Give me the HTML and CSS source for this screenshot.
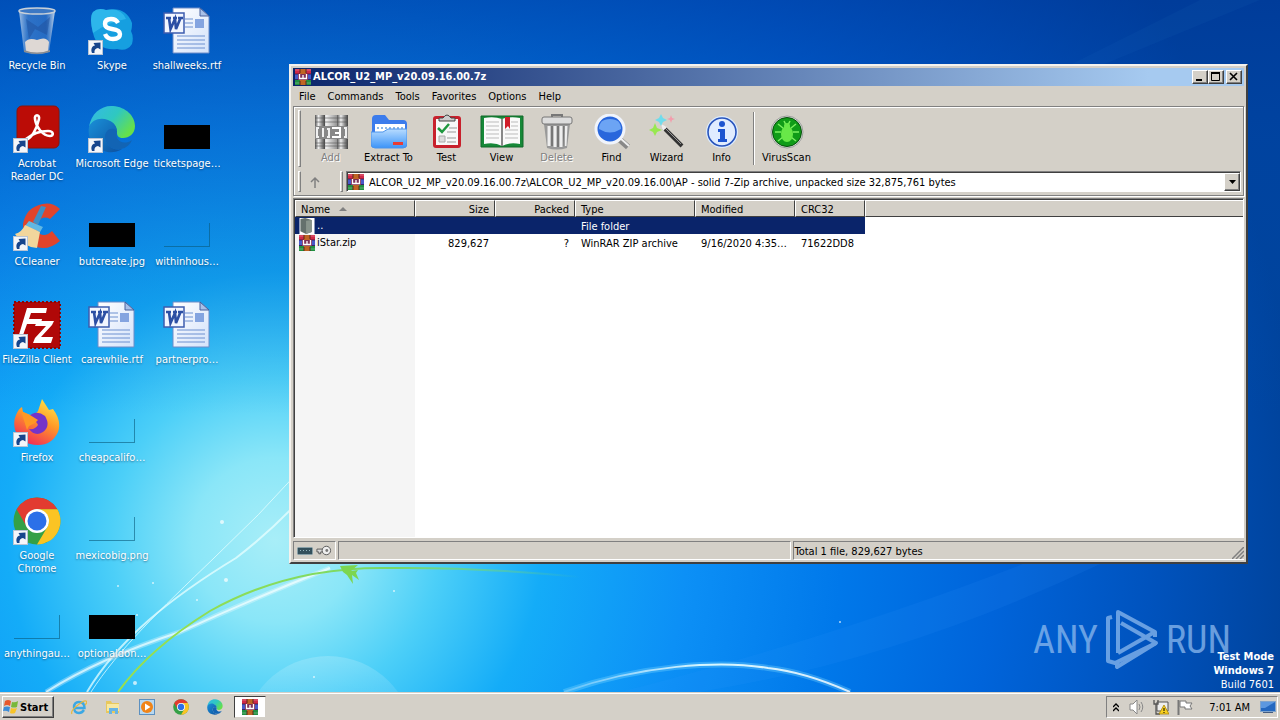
FILE: index.html
```html
<!DOCTYPE html>
<html lang="en">
<head>
<meta charset="utf-8">
<title>ALCOR_U2_MP_v20.09.16.00.7z</title>
<link rel="stylesheet" href="styles.css">
</head>
<body>
<svg class="sprite" aria-hidden="true">
  <defs>
    <radialGradient id="glow" gradientUnits="userSpaceOnUse" cx="275" cy="540" r="1030">
      <stop offset="0" stop-color="#a8eef8"/><stop offset=".08" stop-color="#8ae6f8"/><stop offset=".16" stop-color="#4ccff8"/>
      <stop offset=".26" stop-color="#14acf8"/><stop offset=".4" stop-color="#0c90f6"/><stop offset=".55" stop-color="#0078ea"/>
      <stop offset=".7" stop-color="#0064da"/><stop offset=".85" stop-color="#0053be"/><stop offset="1" stop-color="#00429a"/>
    </radialGradient>
    <linearGradient id="shade" x1="0" y1="0" x2="0" y2="1">
      <stop offset="0" stop-color="#00389a" stop-opacity=".6"/><stop offset=".2" stop-color="#0044a8" stop-opacity=".4"/><stop offset=".6" stop-color="#0050b0" stop-opacity="0"/>
    </linearGradient>
    <linearGradient id="orb" x1="0" y1="0" x2="0" y2="1"><stop offset="0" stop-color="#fff" stop-opacity=".18"/><stop offset=".5" stop-color="#fff" stop-opacity="0"/></linearGradient>
    <linearGradient id="streak" x1="0" y1="0" x2="1" y2="0"><stop offset="0" stop-color="#fff" stop-opacity=".2"/><stop offset=".5" stop-color="#d8f8ff"/><stop offset="1" stop-color="#fff" stop-opacity=".8"/></linearGradient>
    <linearGradient id="stem" x1="0" y1="0" x2="1" y2="0"><stop offset="0" stop-color="#9be04a"/><stop offset=".6" stop-color="#78d868"/><stop offset="1" stop-color="#78d868" stop-opacity="0"/></linearGradient>
    <linearGradient id="edgeA" x1="0" y1="0" x2="1" y2=".6"><stop offset="0" stop-color="#35b8e8"/><stop offset=".55" stop-color="#2fc8c0"/><stop offset="1" stop-color="#66e04a"/></linearGradient>
    <linearGradient id="edgeB" x1="0" y1="0" x2="1" y2="1"><stop offset="0" stop-color="#1a90d8"/><stop offset="1" stop-color="#0c50a0"/></linearGradient>
    <linearGradient id="fox" x1=".8" y1="0" x2=".3" y2="1"><stop offset="0" stop-color="#ffe848"/><stop offset=".45" stop-color="#ff9a28"/><stop offset="1" stop-color="#f02858"/></linearGradient>
    <linearGradient id="glass" x1="0" y1="0" x2="1" y2="0"><stop offset="0" stop-color="#c8dcf0" stop-opacity=".8"/><stop offset=".25" stop-color="#5c90d0" stop-opacity=".5"/><stop offset=".75" stop-color="#4a80c8" stop-opacity=".5"/><stop offset="1" stop-color="#d8e4f0" stop-opacity=".9"/></linearGradient>
    <linearGradient id="folder" x1="0" y1="0" x2="0" y2="1"><stop offset="0" stop-color="#b8dcff"/><stop offset="1" stop-color="#3c94f8"/></linearGradient>
    <linearGradient id="steel" x1="0" y1="0" x2="1" y2="0"><stop offset="0" stop-color="#555"/><stop offset=".35" stop-color="#eee"/><stop offset=".65" stop-color="#999"/><stop offset="1" stop-color="#444"/></linearGradient>
    <linearGradient id="page" x1="0" y1="0" x2="1" y2="1"><stop offset="0" stop-color="#fff"/><stop offset="1" stop-color="#d4e2fa"/></linearGradient>
  </defs>
  <symbol id="arrow" viewBox="0 0 15 15"><rect x=".5" y=".5" width="14" height="14" fill="#f4f6fa" stroke="#b8c4d4"/><path d="M4 13C2.500 9 4 6 7 5.500L5.500 3l7-.5V9.500L10 8C7.500 8.500 6 10 6.500 13Z" fill="#17458c"/></symbol>
  <symbol id="rar" viewBox="0 0 16 16"><path d="M0 0h16v5H0z" fill="#d02848"/><path d="M0 5h16v6H0z" fill="#4858c8"/><path d="M0 11h16v5H0z" fill="#209040"/><path d="M0 1h16M0 14h16" stroke="#fff" stroke-opacity=".3"/><path d="M0 5h16M0 10.500h16" stroke="#301038" stroke-opacity=".7"/><path d="M5 0h6v16H5z" fill="#c06424"/><path d="M5 0v4M11 0v4M5 12v4M11 12v4" stroke="#582818"/><path d="M3 5h10v6H3z" fill="#803058"/><path d="M4.500 5v4.500h3.500V6v3.500h3.500V5" fill="none" stroke="#fff" stroke-width="1.300"/></symbol>
  <symbol id="word" viewBox="0 0 48 48"><path d="M10 1h27l9 8v37H10z" fill="url(#page)" stroke="#6c8cc8"/><path d="M37 1v8h9z" fill="#a8c0e8" stroke="#48609c"/><path d="M22 12h8M22 16h8M22 20h8M14 29h28M14 33h28M14 37h28M14 41h28" stroke="#6c90d0"/><rect x="32" y="12" width="9" height="9" fill="#84a4e0"/><rect x="1" y="6" width="20" height="20" fill="#f2f6ff" stroke="#3c5cae" stroke-width="1.500"/><path d="M3 11h5M10 11h4M15 11h5M6 11l1.500 11L12 12l1 10 4.500-11" fill="none" stroke="#2c4fa4" stroke-width="2.600"/></symbol>
  <symbol id="edge" viewBox="0 0 48 48"><path d="M1 22C3 8 14 0 25 1c13 1 22 10 22 20 0 8-6 12-12 12-4 0-6-2-6-5 0-8-6-13-14-13C8 15 3 18 1 22Z" fill="url(#edgeA)"/><path d="M1 22c3-8 12-10 19-7 6 2 9 7 9 11-4-4-12-1-12 6 0 8 8 14 17 12-6 4-13 4-18 2C5 43-1 33 1 22Z" fill="url(#edgeB)"/><path d="M29 26c-5-5-12-1-12 6 0 8 8 14 16 12 5-1 9-4 11-9-7 5-13 2-15-2-1-2 0-4 0-7Z" fill="#1264b4"/></symbol>
  <symbol id="chrome" viewBox="0 0 48 48"><circle cx="24" cy="24" r="23.500" fill="#34a046"/><path d="M3.600 12.300A23.500 23.500 0 0 1 44.400 12.300H24A12 12 0 0 0 13.800 30Z" fill="#e23b30"/><path d="M44.400 12.300A23.500 23.500 0 0 1 24 47.500L34.400 30A12 12 0 0 0 24 12.300Z" fill="#fbc424"/><circle cx="24" cy="24" r="12" fill="#fff"/><circle cx="24" cy="24" r="9.500" fill="#2c70e8"/></symbol>
</svg>

<main class="desktop">
  <svg class="wallpaper" viewBox="0 0 1280 692" preserveAspectRatio="xMidYMid slice" aria-hidden="true">
    <rect width="1280" height="692" fill="url(#glow)"/>
    <rect width="1280" height="692" fill="url(#shade)"/>
    <path d="M1060 70L1200 0h60L1090 70Z" fill="#2c80c8" opacity=".08"/>
    <path d="M620 692Q900 620 1130 520L1100 564Q900 660 700 692Z" fill="#38a0ff" opacity=".1"/>
    <circle cx="328" cy="742" r="86" fill="url(#orb)"/>
    <g fill="none">
      <path d="M46 692Q100 658 180 632Q250 600 330 568" stroke="#fff" stroke-width="5" opacity=".3"/>
      <path d="M46 692Q100 658 180 632Q250 600 330 568" stroke="#f4ffff" stroke-width="2" opacity=".7"/>
      <path d="M87 692C118 640 170 598 236 558Q270 532 300 500" stroke="#e8ffff" stroke-width="2" opacity=".75"/>
      <path d="M91 692C118 650 160 610 214 558Q260 515 300 470" stroke="#e8ffff" stroke-width="1" opacity=".75"/>
      <path d="M118 692Q150 648 210 611Q290 566 390 568Q480 567 580 577" stroke="url(#stem)" stroke-width="2"/>
      <path d="M564 692C640 665 720 660 768 668Q805 672 850 692" stroke="#7cd8ff" stroke-width="6" opacity=".35"/>
      <path d="M564 692C640 665 720 660 768 668Q805 672 850 692" stroke="url(#streak)" stroke-width="2"/>
    </g>
    <path d="M340 566l18-1-7 6 7-1-2 3 3 7-7-5 1 9-6-9-4-3Z" fill="#7cd650"/>
    <g fill="#fff" opacity=".7"><circle cx="226" cy="580" r="2"/><circle cx="222" cy="522" r="2"/><circle cx="135" cy="683" r="2"/><circle cx="118" cy="586" r="1"/><circle cx="153" cy="583" r="1"/><circle cx="197" cy="600" r="1"/><circle cx="314" cy="677" r="1"/><circle cx="394" cy="591" r="1"/><circle cx="137" cy="615" r="1"/><circle cx="840" cy="622" r="1"/></g>
  </svg>

  <ul class="shortcuts">
    <li class="shortcut"><svg class="pic" viewBox="0 0 48 48"><path d="M6 4l5 41q13 5 25 0l6-41Z" fill="url(#glass)"/><path d="M13 12l12 8 12-10-3 18-12-6-6 10Z" fill="#20509c" opacity=".5"/><path d="M12 35q4-5 12-2 9-4 12 2l-1 10q-11 3-22 0Z" fill="#ded8d4"/><path d="M11 43q13 5 26 0v2q-13 4-26 0" fill="#8a8c90"/><ellipse cx="24" cy="4" rx="18" ry="3" fill="#3c78c4" stroke="#c8d0d8" stroke-width="1.500"/></svg><span class="label">Recycle Bin</span></li>
    <li class="shortcut"><svg class="pic" viewBox="0 0 48 48"><rect x="4" y="1" width="42" height="42" rx="5" fill="#bb0c06" stroke="#8c1408"/><path d="M11 36c8-2 13-13 15-22 1-5-5-5-4 0 1 8 8 17 15 17 4 0 4-5-2-5-8 0-16 3-22 8" fill="none" stroke="#fff" stroke-width="2.600"/><use href="#arrow" x="0" y="33" width="15" height="15"/></svg><span class="label">Acrobat<br>Reader DC</span></li>
    <li class="shortcut"><svg class="pic" viewBox="0 0 48 48"><path d="M47 6Q39-1 30 1 13 4 10 21q0 17 11 22 13 6 26-5L39 28q-6 6-12 3-6-5-2-12 5-7 12-3Z" fill="#e0442c"/><path d="M33 4l-8 18-5-3L28 3Z" fill="#3c90c8"/><path d="M16 18l14 6-3 5-15-6Z" fill="#60b8e4"/><path d="M12 22l15 7-3 16Q10 44 2 31Q9 29 12 22Z" fill="#f2d69c"/><use href="#arrow" x="0" y="33" width="15" height="15"/></svg><span class="label">CCleaner</span></li>
    <li class="shortcut"><svg class="pic" viewBox="0 0 48 48"><rect x="1" y="1" width="46" height="46" fill="#b00808" stroke="#8c0404" stroke-width="2" stroke-dasharray="2 2"/><path d="M14 7h20l-1 5H18l-2 6h13l-1 5H14l-5 14H5Z" fill="#fff"/><path d="M24 20h17l-2 4-11 12h12l-2 6H20l2-5 11-12H22Z" fill="#fff"/><use href="#arrow" x="0" y="33" width="15" height="15"/></svg><span class="label">FileZilla Client</span></li>
    <li class="shortcut"><svg class="pic" viewBox="0 0 48 48"><path d="M3 16Q6 9 9 8l1 5 7 3Q23 15 25 12L29 0l7 11 4-1Q49 22 45 33 39 46 25 46 8 46 2 31 0 22 3 16Z" fill="url(#fox)"/><path d="M15 18q8-8 17-1 6 10-2 16-8 5-14-3 6 1 9-4-2-5-10-8Z" fill="#7434c8"/><path d="M8 12l9 4 8 5-3 3-6 3-2 4Z" fill="#ff9824"/><use href="#arrow" x="0" y="33" width="15" height="15"/></svg><span class="label">Firefox</span></li>
    <li class="shortcut"><svg class="pic" viewBox="0 0 48 48"><use href="#chrome" width="48" height="48"/><use href="#arrow" x="0" y="33" width="15" height="15"/></svg><span class="label">Google<br>Chrome</span></li>
    <li class="shortcut"><span class="thumb"></span><span class="label">anythingau…</span></li>
    <li class="shortcut"><svg class="pic" viewBox="0 0 48 48"><path d="M5 5Q10 0 18 3 38-1 44 16q0 6-1 8 3 6 1 13-5 8-15 5Q9 44 5 26 1 10 5 5Z" fill="#169fe0"/><path d="M5 5Q10 0 18 3 33 0 38 12 20 15 5 26 1 10 5 5Z" fill="#38c0f0" opacity=".7"/><path d="M30 16q-2-4-7-4-6 0-6 5 0 4 7 5 8 1 8 5 0 5-7 5-6 0-8-5" fill="none" stroke="#fff" stroke-width="4.400"/><use href="#arrow" x="0" y="33" width="15" height="15"/></svg><span class="label">Skype</span></li>
    <li class="shortcut"><svg class="pic" viewBox="0 0 48 48"><use href="#edge" width="48" height="48"/><use href="#arrow" x="0" y="33" width="15" height="15"/></svg><span class="label">Microsoft Edge</span></li>
    <li class="shortcut"><span class="thumb dark"></span><span class="label">butcreate.jpg</span></li>
    <li class="shortcut"><svg class="pic"><use href="#word"/></svg><span class="label">carewhile.rtf</span></li>
    <li class="shortcut"><span class="thumb"></span><span class="label">cheapcalifo…</span></li>
    <li class="shortcut"><span class="thumb"></span><span class="label">mexicobig.png</span></li>
    <li class="shortcut"><span class="thumb dark"></span><span class="label">optionaldon…</span></li>
    <li class="shortcut"><svg class="pic"><use href="#word"/></svg><span class="label">shallweeks.rtf</span></li>
    <li class="shortcut"><span class="thumb dark"></span><span class="label">ticketspage…</span></li>
    <li class="shortcut"><span class="thumb"></span><span class="label">withinhous…</span></li>
    <li class="shortcut"><svg class="pic"><use href="#word"/></svg><span class="label">partnerpro…</span></li>
  </ul>

  <div class="brand">
    <span>ANY</span>
    <svg class="play" viewBox="0 0 56 62" aria-hidden="true"><g fill="none" stroke="currentColor" stroke-width="4" stroke-linejoin="round"><path d="M8 8L4 9v43l7 2L52 34 17 14"/><path d="M14 44V3l37 20v5M14 44l35-20M52 34L13 58v-4"/></g></svg>
    <span>RUN</span>
  </div>
  <div class="build"><strong>Test Mode</strong><strong>Windows 7</strong><span>Build 7601</span></div>

  <section class="window">
    <header class="titlebar">
      <svg class="small"><use href="#rar"/></svg>
      <h1 class="title">ALCOR_U2_MP_v20.09.16.00.7z</h1>
      <button class="caption" aria-label="Minimize"><svg viewBox="0 0 12 10"><path d="M2 8h6" stroke="#000" stroke-width="2"/></svg></button>
      <button class="caption" aria-label="Maximize"><svg viewBox="0 0 12 10"><path d="M1.500 1v7.500h8V1M1 1h9" fill="none" stroke="#000"/><path d="M1 1h9" stroke="#000" stroke-width="2"/></svg></button>
      <button class="caption close" aria-label="Close"><svg viewBox="0 0 12 10"><path d="M2 1l7 7M9 1L2 8" stroke="#000" stroke-width="1.600"/></svg></button>
    </header>
    <nav class="menu"><button>File</button><button>Commands</button><button>Tools</button><button>Favorites</button><button>Options</button><button>Help</button></nav>
    <div class="bars">
      <div class="toolbar">
        <span class="grip"></span>
        <button class="tool" disabled><svg viewBox="0 0 36 36"><path d="M2 1h11v34H2zM13 1h11v34H13zM24 1h11v34H24z" fill="url(#steel)"/><path d="M2 1h10v34H2z" fill="url(#steel)"/><path d="M24 1h11v34H24z" fill="url(#steel)"/><path d="M2 4h33M2 8h33M2 29h33M2 32h33" stroke="#555" opacity=".6"/><path d="M2 12h33v13H2z" fill="#888"/><path d="M6 14H4v9h2M10 14v9M14 15h2v8h-2M31 14h2v9h-2" stroke="#f0f0f0" stroke-width="2" fill="none"/><path d="M19 14h8v9h-8M22 19h5" stroke="#fff" stroke-width="2" fill="none"/></svg>Add</button>
        <button class="tool wide"><svg viewBox="0 0 36 36"><path d="M1 5q0-4 4-4h9l4 5h14q4 0 4 4v15H1Z" fill="#3c7cec"/><path d="M4 10h30v12H4z" fill="#fff"/><path d="M6 14h27" stroke="#8cb8e8" stroke-dasharray="2 2" stroke-width="2"/><path d="M0 18h12l5-3h19v15q0 4-4 4H4q-4 0-4-4Z" fill="url(#folder)" stroke="#4c94ec"/><path d="M22 28h10v3H22z" fill="#e83c34"/></svg>Extract To</button>
        <button class="tool"><svg viewBox="0 0 36 36"><rect x="4" y="2" width="28" height="32" rx="3" fill="#c8202c"/><path d="M7 5h22v26H7z" fill="#f8f8f8"/><path d="M10 7V4h4q4-6 8 0h4v3Z" fill="#ccc" stroke="#444"/><path d="M9 14l4 4 7-8" fill="none" stroke="#209840" stroke-width="2.500"/><path d="M18 18h9M20 14h8M18 24h9M18 28h9" stroke="#999"/><path d="M10 22h6v6h-6z" fill="#ddd" stroke="#aaa"/></svg>Test</button>
        <button class="tool"><svg class="book" viewBox="0 0 44 36"><path d="M1 2h42v31H1z" fill="#168838" stroke="#106828"/><path d="M4 4q10-2 18 1 8-3 18-1v26q-11-2-18 2Q15 28 4 30Z" fill="#fafafa"/><path d="M6 8h13M6 12h13M6 16h13M6 20h13M6 24h13M25 16h13M25 20h13M25 24h13M31 12h7M31 8h7" stroke="#bbb"/><path d="M22 5v27" stroke="#888" stroke-width="2"/><path d="M25 3h5v12l-2-3-3 3Z" fill="#d01c28"/></svg>View</button>
        <button class="tool" disabled><svg viewBox="0 0 36 36"><path d="M5 10h26l-3 24q-10 3-20 0Z" fill="#999"/><path d="M10 12v20M16 12v21M22 12v21M27 12l-1 20" stroke="#eee" stroke-width="3"/><path d="M13 12v20M19 12v21M25 12v20" stroke="#555"/><rect x="3" y="3" width="30" height="7" rx="2" fill="#ddd" stroke="#777"/><path d="M13 3V1h10v2" fill="none" stroke="#777" stroke-width="2"/></svg>Delete</button>
        <button class="tool"><svg viewBox="0 0 36 36"><path d="M25 25l9 8" stroke="#888" stroke-width="6"/><path d="M25 23l10 9" stroke="#eee" stroke-width="2"/><circle cx="16" cy="15" r="14" fill="#2866dc" stroke="#f0f4fc" stroke-width="3"/><path d="M5 15q0-10 11-10t11 10Q16 22 5 15Z" fill="#6ca4f4"/></svg>Find</button>
        <button class="tool"><svg viewBox="0 0 36 36"><path d="M15 14l18 18" stroke="#333" stroke-width="4"/><path d="M15 13l17 17" stroke="#999"/><path d="M12 10l6 3-4 4Z" fill="#eee"/><path d="M12 0l2 4 4 2-4 2-2 4-2-4-4-2 4-2Z" fill="#70dcec"/><path d="M6 9l2 5 5 2-5 2-2 4-2-4-4-2 4-2Z" fill="#98e850"/><path d="M22 1l1 3 3 1-3 1-1 3-1-3-3-1 3-1Z" fill="#f49cac"/></svg>Wizard</button>
        <button class="tool"><svg viewBox="0 0 36 36"><circle cx="18" cy="18" r="16" fill="#dcecff"/><circle cx="18" cy="18" r="14" fill="#e0ecff" stroke="#2854bc" stroke-width="1.600"/><circle cx="18" cy="10" r="3" fill="#1c54d0"/><path d="M14 15h7v10h2v3h-9v-3h2v-7h-2z" fill="#1c54d0"/></svg>Info</button>
        <span class="divider"></span>
        <button class="tool"><svg viewBox="0 0 36 36"><circle cx="18" cy="18" r="16" fill="#e8ece8" stroke="#999"/><circle cx="18" cy="18" r="14.500" fill="#109c18" stroke="#084c0c"/><path d="M9 10l5 4M27 10l-5 4M6 18h6M30 18h-6M9 27l5-4M27 27l-5-4M15 7l2 4M21 7l-2 4" stroke="#7cf060" stroke-width="1.500"/><ellipse cx="18" cy="20" rx="6" ry="8" fill="#68e848"/><circle cx="18" cy="12" r="3" fill="#68e848"/></svg>VirusScan</button>
      </div>
      <div class="address">
        <span class="grip"></span>
        <button class="up" aria-label="Up one level"><svg viewBox="0 0 12 12"><path d="M6 12V2M2 6l4-4 4 4" fill="none" stroke="#808080" stroke-width="1.500"/></svg></button>
        <span class="grip"></span>
        <div class="combo">
          <svg class="small"><use href="#rar"/></svg>
          <select class="path" aria-label="Archive path"><option>ALCOR_U2_MP_v20.09.16.00.7z\ALCOR_U2_MP_v20.09.16.00\AP - solid 7-Zip archive, unpacked size 32,875,761 bytes</option></select>
          <span class="drop"><svg viewBox="0 0 7 4"><path d="M0 0h7L3.500 4Z"/></svg></span>
        </div>
      </div>
    </div>
    <div class="list">
      <table class="files">
        <colgroup><col class="w120"><col class="w80"><col class="w80"><col class="w120"><col class="w100"><col class="w70"><col></colgroup>
        <thead><tr><th>Name <svg class="sort" viewBox="0 0 8 4"><path d="M4 0l4 4H0Z" fill="#808080"/></svg></th><th class="num">Size</th><th class="num">Packed</th><th>Type</th><th>Modified</th><th>CRC32</th><th></th></tr></thead>
        <tbody>
          <tr class="selected"><td class="name"><span class="entry"><svg class="small" viewBox="0 0 16 17"><path d="M0 0h16v17H0z" fill="#fff"/><path d="M1 1l5-1 7 2v13l-6 2-6-3Z" fill="#64706c"/><path d="M7 3l6-1v13l-6 2Z" fill="#88948c"/></svg>..</span></td><td></td><td></td><td>File folder</td><td></td><td></td><td class="rest"></td></tr>
          <tr><td class="name"><span class="entry"><svg class="small"><use href="#rar"/></svg>iStar.zip</span></td><td class="num">829,627</td><td class="num">?</td><td>WinRAR ZIP archive</td><td>9/16/2020 4:35…</td><td>71622DD8</td><td></td></tr>
        </tbody>
      </table>
    </div>
    <footer class="status">
      <span class="cell icons"><svg viewBox="0 0 16 8"><rect x=".5" y=".5" width="15" height="7" rx="1" fill="#34505c" stroke="#88a0a8"/><path d="M3 3.500h10" stroke="#94b4bc" stroke-dasharray="1 2"/></svg><svg class="key" viewBox="0 0 17 11"><path d="M1 4h9v3H5v2H3V7H1Z" fill="#ddd" stroke="#555"/><circle cx="11" cy="5.500" r="4.500" fill="#eee" stroke="#555"/><circle cx="11.500" cy="5.500" r="1.500" fill="#777"/></svg></span>
      <span class="cell grow"></span>
      <span class="cell grow last">Total 1 file, 829,627 bytes<svg class="resize" viewBox="0 0 12 12"><path d="M0 12L12 0M4 12l8-8M8 12l4-4" stroke="#808080" stroke-width="1.500"/></svg></span>
    </footer>
  </section>
</main>

<footer class="taskbar">
  <button class="start"><svg viewBox="0 0 16 16"><path d="M2 2q3-2 6 0L7 7Q4 5 1 7Z" fill="#e8582c"/><path d="M9 3q3 1 6-1l-1 6q-3 1-6 0Z" fill="#78b83c"/><path d="M1 8q3-1 6 0l-1 5q-3-2-6-1Z" fill="#3c8cd8"/><path d="M8 9q3 1 6 0l-2 5q-3 1-5 0Z" fill="#f8c428"/></svg>Start</button>
  <nav class="pins">
    <button aria-label="Internet Explorer"><svg viewBox="0 0 16 16"><path d="M13 11q-2 3-5 3-5 0-5-5.500T8 3q5.500 0 5.500 6H4" fill="none" stroke="#3ca8e4" stroke-width="2.400"/><path d="M1 15q-2-3 6-9 6-5 8-4t-1 4" fill="none" stroke="#e8b83c" stroke-width="1.200"/></svg></button>
    <button aria-label="Explorer"><svg viewBox="0 0 16 16"><path d="M1 2h5l1 2h7v10H1Z" fill="#e8c85c"/><path d="M2 5h12v7H2z" fill="#f8e8a0"/><path d="M4 15V9h9v6h-3v-3H7v3Z" fill="#68b4e4"/></svg></button>
    <button aria-label="Media Player"><svg viewBox="0 0 16 16"><rect x=".5" y=".5" width="15" height="15" fill="#b8d8f0" stroke="#5c90c0"/><circle cx="8" cy="8" r="6" fill="#f08418"/><path d="M6 4.500l5.500 3.500L6 11.500Z" fill="#fff"/></svg></button>
    <button aria-label="Chrome"><svg><use href="#chrome"/></svg></button>
    <button aria-label="Edge"><svg><use href="#edge"/></svg></button>
  </nav>
  <button class="task" aria-label="WinRAR"><svg class="small"><use href="#rar"/></svg></button>
  <div class="tray">
    <svg class="chev" viewBox="0 0 6 9"><path d="M0 4l3-3 3 3M0 8l3-3 3 3" fill="none" stroke="#000" stroke-width="1.300"/></svg>
    <svg viewBox="0 0 16 16"><path d="M1 5h3l4-4v14l-4-4H1Z" fill="#fff" stroke="#888"/><path d="M10 5q2 3 0 6M12 3q3.500 5 0 10" fill="none" stroke="#888"/></svg>
    <svg class="net" viewBox="0 0 16 16"><path d="M4 3h11v9H4z" fill="#eee" stroke="#555"/><path d="M1 1v4h4V1M3 5v10h4" fill="none" stroke="#555" stroke-width="1.300"/><path d="M11 6l5 9H6Z" fill="#f8d020" stroke="#a88408" stroke-width=".8"/><path d="M11 9v3M11 13v1" stroke="#000"/></svg>
    <svg viewBox="0 0 16 16"><path d="M1.500 1v15" stroke="#777" stroke-width="2"/><path d="M3 2h6v2h6l-2 3 2 3H8V8H3Z" fill="#fff" stroke="#777"/></svg>
    <time class="clock">7:01 AM</time>
    <svg viewBox="0 0 16 16"><rect x=".5" y="2.500" width="15" height="10" fill="#2468c0" stroke="#80a4cc"/><path d="M1 3h14L5 9H1Z" fill="#5c98e0"/><path d="M3 13h10v1H3z" fill="#445c80"/></svg>
  </div>
</footer>
</body>
</html>
```
FILE: styles.css
```css
* { box-sizing: border-box; }
body {
  margin: 0;
  height: 100vh;
  display: flex;
  flex-direction: column;
  overflow: hidden;
  font: 11px/13px Tahoma, "DejaVu Sans Condensed", "DejaVu Sans", sans-serif;
  color: #000;
}
button, select { font: inherit; color: inherit; margin: 0; padding: 0; border: 0; background: none; border-radius: 0; }
svg { display: block; flex: none; }
.sprite { position: absolute; width: 0; height: 0; }
.small { width: 16px; height: 16px; }

.desktop { position: relative; flex: 1; min-height: 0; overflow: hidden; background: #0064d0; }
.wallpaper { position: absolute; inset: 0; width: 100%; height: 100%; }

.shortcuts {
  position: relative;
  margin: 0;
  padding: 7px 0 0;
  list-style: none;
  display: grid;
  grid-auto-flow: column;
  grid-template-rows: repeat(7, 98px);
  grid-auto-columns: 74px;
  gap: 0 1px;
}
.shortcut { display: flex; flex-direction: column; align-items: center; gap: 4px; }
.pic { width: 48px; height: 48px; }
.label { text-align: center; color: #fff; text-shadow: 0 1px 2px #00204088; white-space: nowrap; }
.thumb { width: 46px; height: 24px; margin: 20px 0 4px; border: solid #0a5a7c99; border-width: 0 1px 1px 0; }
.thumb.dark { background: #000; border-color: #000; }

.brand {
  position: absolute;
  right: 49px;
  bottom: 21px;
  display: flex;
  align-items: center;
  gap: 6px;
  color: #8bb9ee;
  opacity: .75;
  font: 38px/60px "Roboto Condensed", "Liberation Sans Narrow", "Liberation Sans", sans-serif;
}
.play { width: 56px; height: 62px; }
.build { position: absolute; right: 6px; bottom: 0; display: flex; flex-direction: column; align-items: flex-end; line-height: 14px; color: #fff; }

.window {
  position: absolute;
  left: 289px;
  right: 32px;
  top: 64px;
  bottom: 128px;
  display: flex;
  flex-direction: column;
  padding: 2px;
  background: #d4d0c8;
  border: 2px solid;
  border-color: #f4f2ee #404040 #404040 #f4f2ee;
}
.titlebar { display: flex; align-items: center; height: 18px; padding: 0 2px; background: linear-gradient(90deg, #0a246a, #a6caf0 90%); }
.title { flex: 1; margin: 0 0 0 2px; font: bold 11px/18px Tahoma, "DejaVu Sans Condensed", "DejaVu Sans", sans-serif; color: #fff; }
.caption { width: 16px; height: 14px; background: #d4d0c8; border: 1px solid; border-color: #fff #404040 #404040 #fff; box-shadow: inset -1px -1px #808080; padding: 1px; }
.caption svg { width: 12px; height: 10px; }
.close { margin-left: 2px; }
.menu { display: flex; height: 20px; flex: none; }
.menu button { padding: 0 6px; }

.bars { flex: none; border: 1px solid #808080; box-shadow: inset 1px 1px #fff, 1px 1px #fff; height: 90px; padding: 3px 2px; display: flex; flex-direction: column; gap: 4px; }
.toolbar { display: flex; height: 58px; }
.grip { width: 3px; margin: 0 2px; border: 1px solid; border-color: #fff #808080 #808080 #fff; }
.tool { width: 55px; display: flex; flex-direction: column; align-items: center; justify-content: flex-end; gap: 1px; padding-bottom: 3px; white-space: nowrap; }
.tool.wide { width: 61px; }
.tool svg { width: 36px; height: 36px; }
.tool svg.book { width: 44px; }
.tool:disabled { color: #808080; text-shadow: 1px 1px #fff; }
.divider { width: 2px; margin: 2px 4px; border-left: 1px solid #808080; border-right: 1px solid #fff; }
.address { display: flex; height: 21px; }
.up { width: 35px; display: flex; align-items: center; padding-left: 6px; }
.up svg { width: 12px; height: 12px; }
.combo { flex: 1; display: flex; align-items: center; margin-left: 1px; padding-left: 1px; background: #fff; border: 1px solid; border-color: #808080 #fff #fff #808080; box-shadow: inset 1px 1px #404040; }
.path { appearance: none; flex: 1; min-width: 0; height: 18px; padding: 1px 0 0 5px; }
.drop { width: 16px; height: 18px; background: #d4d0c8; border: 1px solid; border-color: #fff #404040 #404040 #fff; box-shadow: inset -1px -1px #808080; display: flex; align-items: center; justify-content: center; pointer-events: none; }
.drop svg { width: 7px; height: 4px; }

.list {
  flex: 1;
  min-height: 0;
  margin-top: 2px;
  border: 1px solid;
  border-color: #808080 #fff #fff #808080;
  box-shadow: inset 1px 1px #404040;
  padding: 1px 0 0 1px;
  background: linear-gradient(90deg, #f5f5f5 120px, #fff 120px) content-box, #fff;
}
.files { width: 100%; table-layout: fixed; border-collapse: separate; border-spacing: 0; }
.w120 { width: 120px; }
.w100 { width: 100px; }
.w80 { width: 80px; }
.w70 { width: 70px; }
.files th { height: 17px; padding: 1px 5px 0; font-weight: normal; text-align: left; background: #d4d0c8; border: solid; border-width: 1px; border-color: #fff #404040 #404040 #fff; white-space: nowrap; }
.files th:last-child { border-right: 0; }
.files td { height: 17px; padding: 2px 6px 0; white-space: nowrap; }
.files .num { text-align: right; }
.files td.name { padding: 0 0 0 4px; }
.sort { width: 8px; height: 4px; display: inline-block; margin: 0 0 2px 6px; }
.entry { display: flex; align-items: center; gap: 2px; height: 17px; line-height: 17px; }
.selected td { background: #0a246a; color: #fff; }
.selected td.rest { background: none; }

.status { display: flex; gap: 2px; margin-top: 3px; height: 19px; flex: none; }
.cell { position: relative; border: 1px solid; border-color: #808080 #fff #fff #808080; padding: 0 1px; line-height: 19px; }
.grow { flex: 1; }
.last { border-right: 0; }
.icons { width: 43px; display: flex; align-items: center; gap: 3px; padding-left: 3px; }
.icons svg { width: 16px; height: 8px; }
.icons .key { height: 11px; }
.resize { position: absolute; right: 0; bottom: 0; width: 12px; height: 12px; }

.taskbar { flex: none; height: 28px; display: flex; align-items: center; padding: 3px 2px 1px; background: #d4d0c8; box-shadow: inset 0 1px #d4d0c8, inset 0 2px #fff; }
.start { width: 52px; height: 22px; display: flex; align-items: center; gap: 1px; font-weight: bold; font-size: 11px; border: 1px solid; border-color: #fff #404040 #404040 #fff; box-shadow: inset -1px -1px #808080; }
.start svg { width: 16px; height: 16px; }
.pins { display: flex; gap: 18px; margin: 0 11px 0 17px; }
.pins svg { width: 16px; height: 16px; }
.task { width: 32px; height: 22px; display: flex; align-items: center; justify-content: center; background: #fff; border: 1px solid; border-color: #404040 #d4d0c8 #d4d0c8 #404040; }
.tray { margin-left: auto; height: 22px; display: flex; align-items: center; gap: 8px; padding: 0 1px 0 6px; border: 1px solid; border-color: #808080 #fff #fff #808080; }
.tray svg { width: 16px; height: 16px; }
.tray .chev { width: 6px; height: 9px; margin-right: 2px; }
.clock { margin: 0 2px 0 8px; }
```
